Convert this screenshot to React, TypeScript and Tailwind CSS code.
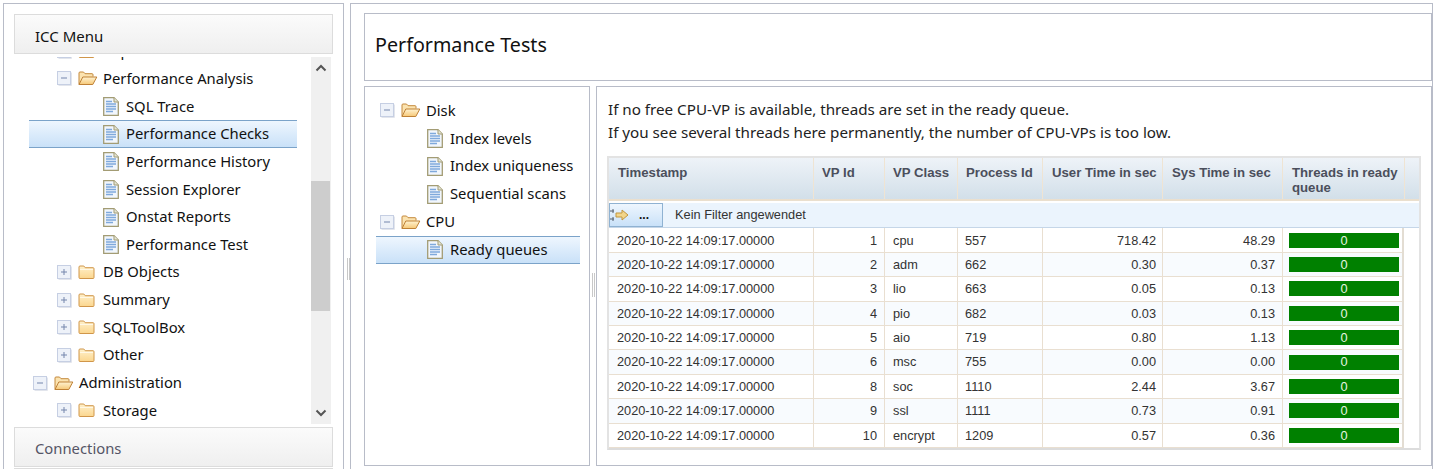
import React from "react";

const FolderOpen = () => (
  <svg width="20" height="15" viewBox="0 0 20 15" className="shrink-0">
    <defs>
      <linearGradient id="fo" x1="0" y1="0" x2="0" y2="1">
        <stop offset="0" stopColor="#fff3d2" />
        <stop offset="1" stopColor="#f6c877" />
      </linearGradient>
    </defs>
    <path d="M1 13.500V2q0-1 1-1h3.500l1.500 1.700h7q1 0 1 1v1.800" fill="#fbe3b0" stroke="#c4893c" />
    <path d="M1 13.500 4.800 6h14l-4 7.500z" fill="url(#fo)" stroke="#bf8136" strokeLinejoin="round" />
  </svg>
);
const FolderClosed = () => (
  <svg width="17" height="15" viewBox="0 0 17 15" className="shrink-0">
    <defs>
      <linearGradient id="fc" x1="0" y1="0" x2="0" y2="1">
        <stop offset="0" stopColor="#fff1cc" />
        <stop offset="1" stopColor="#fbd68e" />
      </linearGradient>
    </defs>
    <path d="M1 12.500V2q0-1 1-1h3.800l1.400 1.700H15q1 0 1 1v8.800q0 1-1 1H2q-1 0-1-1z" fill="url(#fc)" stroke="#d0964a" />
    <path d="M2 4.500h13" stroke="#fff8e6" />
  </svg>
);
const Doc = () => (
  <svg width="16" height="19" viewBox="0 0 16 19" className="shrink-0">
    <path d="M.7.700h10.300l4.300 4.300v13.300H.7z" fill="#f1f6fc" stroke="#a39c74" strokeWidth="1.300" />
    <path d="M11 .700V5h4.300" fill="#e4e6d8" stroke="#a39c74" />
    <path d="M3 4.500h6M3 7h10M3 9.500h10M3 12h10M3 14.500h7" stroke="#7fa9db" strokeWidth="1.300" />
  </svg>
);
const Expander = ({ open }: { open: boolean }) => (
  <svg width="15" height="15" viewBox="0 0 15 15" className="shrink-0">
    <rect x="0.500" y="0.500" width="13" height="13" fill="#eef2f9" stroke="#c6cfe3" />
    <path d="M14.500 1.500v13h-13" fill="none" stroke="#e2e5ec" />
    <path d={open ? "M4 7h6" : "M4 7h6M7 4v6"} stroke="#7486ac" />
  </svg>
);

const treeFont = "pb-[2px] [font-family:'Noto_Sans',sans-serif] text-[14.800px] text-[#111]";

const Folder = ({ label, open, indent, h }: { label: string; open?: boolean; indent: string; h: string }) => (
  <div className={`flex items-center ${h} ${indent}`}>
    <Expander open={!!open} />
    <span className="ml-[6px] flex w-[20px] shrink-0">{open ? <FolderOpen /> : <FolderClosed />}</span>
    <span className={`ml-[5px] whitespace-nowrap ${treeFont}`}>{label}</span>
  </div>
);

const Leaf = ({ label, selected, indent, h }: { label: string; selected?: boolean; indent: string; h: string }) => (
  <div
    className={`flex items-center ${h} ${indent} ${
      selected ? "border-y border-y-[#7ba3c9] bg-gradient-to-b from-[#eef6fe] to-[#c9e1f8]" : ""
    }`}
  >
    <Doc />
    <span className={`ml-[7px] whitespace-nowrap ${treeFont}`}>{label}</span>
  </div>
);

const rows = [
  ["1", "cpu", "557", "718.42", "48.29"],
  ["2", "adm", "662", "0.30", "0.37"],
  ["3", "lio", "663", "0.05", "0.13"],
  ["4", "pio", "682", "0.03", "0.13"],
  ["5", "aio", "719", "0.80", "1.13"],
  ["6", "msc", "755", "0.00", "0.00"],
  ["8", "soc", "1110", "2.44", "3.67"],
  ["9", "ssl", "1111", "0.73", "0.91"],
  ["10", "encrypt", "1209", "0.57", "0.36"],
];

const cols = "grid grid-cols-[205px_71px_73px_85px_120px_120px_122px]";
const headers: [string, string][] = [
  ["Timestamp", "pl-[9px]"],
  ["VP Id", "pl-[8px]"],
  ["VP Class", "pl-[8px]"],
  ["Process Id", "pl-[8px]"],
  ["User Time in sec", "pl-[9px]"],
  ["Sys Time in sec", "pl-[9px]"],
  ["Threads in ready queue", "pl-[9px]"],
];

const Table = () => (
  <div className="mt-[12px] w-[814px] border-2 border-[#e3e3e3] border-b-[#dcdcdc] [font-family:'Liberation_Sans',sans-serif] text-[12.750px]">
    <div className="flex h-[43px] border-b-2 border-b-[#eadfce] bg-gradient-to-b from-[#eef3f8] to-[#d2dfe9]">
      <div className={cols}>
        {headers.map(([h, p]) => (
          <div
            key={h}
            className={`border-r border-r-[#efe4d3] ${p} pr-[2px] pt-[7px] text-[13.200px] font-bold leading-[15px] text-[#4b4f5c]`}
          >
            {h}
          </div>
        ))}
      </div>
    </div>
    <div className="mt-[2px] flex h-[25px] items-center border-b border-[#c5d6e8] bg-[#ebf4fd]">
      <div className="flex h-full w-[54px] items-center border border-[#8fb2d2] bg-gradient-to-b from-[#eef6fe] to-[#c9e1f8]">
        <svg width="20" height="14" viewBox="0 0 20 14" className="shrink-0">
          <path d="M0 3h4M0 11h4M3 1v4M3 9v4" stroke="#56606e" />
          <path d="M6 5h6V2l6 5-6 5V9H6z" fill="#f2d58a" stroke="#c2963f" />
        </svg>
        <span className="ml-[9px] text-[12px] font-bold leading-none text-[#111]">...</span>
      </div>
      <span className="ml-[12px] text-[12.800px] text-[#333]">Kein Filter angewendet</span>
    </div>
    <div className="w-[795px] border-r-2 border-r-[#e3ddd3] pt-[0.400px]">
      {rows.map((r, i) => (
        <div
          key={r[0]}
          className={`${cols} h-[24.400px] border-b border-b-[#e9dfd1] text-[#333] ${i % 2 === 1 ? "bg-[#f8fbfe]" : "bg-white"}`}
        >
          <div className="flex items-center border-r border-r-[#e9dfd1] pl-[8px]">2020-10-22 14:09:17.00000</div>
          <div className="flex items-center justify-end border-r border-r-[#e9dfd1] pr-[7px]">{r[0]}</div>
          <div className="flex items-center border-r border-r-[#e9dfd1] pl-[8px]">{r[1]}</div>
          <div className="flex items-center border-r border-r-[#e9dfd1] pl-[7px]">{r[2]}</div>
          <div className="flex items-center justify-end border-r border-r-[#e9dfd1] pr-[6px]">{r[3]}</div>
          <div className="flex items-center justify-end border-r border-r-[#e9dfd1] pr-[7px]">{r[4]}</div>
          <div className="flex items-center justify-center">
            <div className="flex h-[15px] w-[110px] items-center justify-center bg-[#008000] text-[#e8f5e0]">0</div>
          </div>
        </div>
      ))}
    </div>
  </div>
);

const Scrollbar = () => (
  <div className="relative flex w-[20px] shrink-0 flex-col items-center bg-[#f0f0f0]">
    <svg width="12" height="8" viewBox="0 0 12 8" className="mt-[7px]">
      <path d="M1.500 6.500 6 2l4.500 4.500" fill="none" stroke="#555" strokeWidth="2" />
    </svg>
    <div className="absolute left-0 top-[124px] h-[130px] w-[19px] bg-[#cdcdcd]" />
    <svg width="12" height="8" viewBox="0 0 12 8" className="mb-[7px] mt-auto">
      <path d="M1.500 1.500 6 6l4.500-4.500" fill="none" stroke="#555" strokeWidth="2" />
    </svg>
  </div>
);

const LH = "h-[27.670px]";
const RH = "h-[27.800px]";

export default function App() {
  return (
    <div className="flex h-[469px] w-[1435px] overflow-hidden bg-white pt-[3px] [font-family:'Liberation_Sans',sans-serif]">
      <div className="ml-[3px] h-[480px] w-[341px] shrink-0 border border-[#b8bcc8] px-[10px] pt-[10px]">
        <div className="flex h-[40px] items-center border border-[#dcdcdc] bg-gradient-to-b from-[#fbfbfb] to-[#efefef] pl-[20px] pt-[5px] [font-family:'Noto_Sans',sans-serif] text-[15px] text-[#111]">
          ICC Menu
        </div>
        <div className="mt-[3px] flex h-[367px] overflow-hidden">
          <div className="h-full w-[297px] shrink-0 overflow-hidden">
            <div className="mt-[-19.500px]">
              <Folder label="Replication" indent="pl-[43px]" h={LH} />
              <Folder label="Performance Analysis" open indent="pl-[43px]" h={LH} />
              <Leaf label="SQL Trace" indent="pl-[89px]" h={LH} />
              <Leaf label="Performance Checks" selected indent="ml-[15px] mr-[14px] pl-[74px]" h={LH} />
              <Leaf label="Performance History" indent="pl-[89px]" h={LH} />
              <Leaf label="Session Explorer" indent="pl-[89px]" h={LH} />
              <Leaf label="Onstat Reports" indent="pl-[89px]" h={LH} />
              <Leaf label="Performance Test" indent="pl-[89px]" h={LH} />
              <Folder label="DB Objects" indent="pl-[43px]" h={LH} />
              <Folder label="Summary" indent="pl-[43px]" h={LH} />
              <Folder label="SQLToolBox" indent="pl-[43px]" h={LH} />
              <Folder label="Other" indent="pl-[43px]" h={LH} />
              <Folder label="Administration" open indent="pl-[19px]" h={LH} />
              <Folder label="Storage" indent="pl-[43px]" h={LH} />
            </div>
          </div>
          <Scrollbar />
        </div>
        <div className="mt-[3px] flex h-[40px] items-center border border-[#dcdcdc] bg-gradient-to-b from-[#fbfbfb] to-[#efefef] pl-[20px] pt-[2px] [font-family:'Noto_Sans',sans-serif] text-[14.800px] text-[#556]">
          Connections
        </div>
        <div className="mt-[1px] h-[10px] border-t border-[#dcdcdc]" />
      </div>

      <div className="relative w-[6px] shrink-0">
        <div className="absolute left-[3px] top-[255px] h-[22px] w-[3px] border-x border-[#c8c8c8]" />
      </div>

      <div className="flex h-[480px] w-[1083px] shrink-0 flex-col border border-[#b8bcc8] pl-[13px] pt-[9px]">
        <div className="flex h-[68px] w-[1068px] shrink-0 items-center border border-[#b8bcc8] pb-[5px] pl-[10px] [font-family:'Noto_Sans',sans-serif] text-[19.700px] text-[#111]">
          Performance Tests
        </div>
        <div className="mt-[5px] flex h-[381px] gap-[6px]">
          <div className="relative h-[380px] w-[226px] shrink-0 border border-[#b8bcc8] pl-[11px] pt-[10px]">
            <Folder label="Disk" open indent="pl-[4px]" h={RH} />
            <Leaf label="Index levels" indent="pl-[51px]" h={RH} />
            <Leaf label="Index uniqueness" indent="pl-[51px]" h={RH} />
            <Leaf label="Sequential scans" indent="pl-[51px]" h={RH} />
            <Folder label="CPU" open indent="pl-[4px]" h={RH} />
            <div className="w-[204px]">
              <Leaf label="Ready queues" selected indent="pl-[51px]" h={RH} />
            </div>
            <div className="absolute left-[227px] top-[186px] h-[24px] w-[3px] border-x border-[#c8c8c8]" />
          </div>
          <div className="h-[380px] w-[836px] shrink-0 border border-[#b8bcc8] pl-[10px] pt-[11px]">
            <div className="pl-[1px] [font-family:'Noto_Sans',sans-serif] text-[15.200px] leading-[23px] text-[#222]">
              <div>If no free CPU-VP is available, threads are set in the ready queue.</div>
              <div>If you see several threads here permanently, the number of CPU-VPs is too low.</div>
            </div>
            <Table />
          </div>
        </div>
      </div>
    </div>
  );
}
